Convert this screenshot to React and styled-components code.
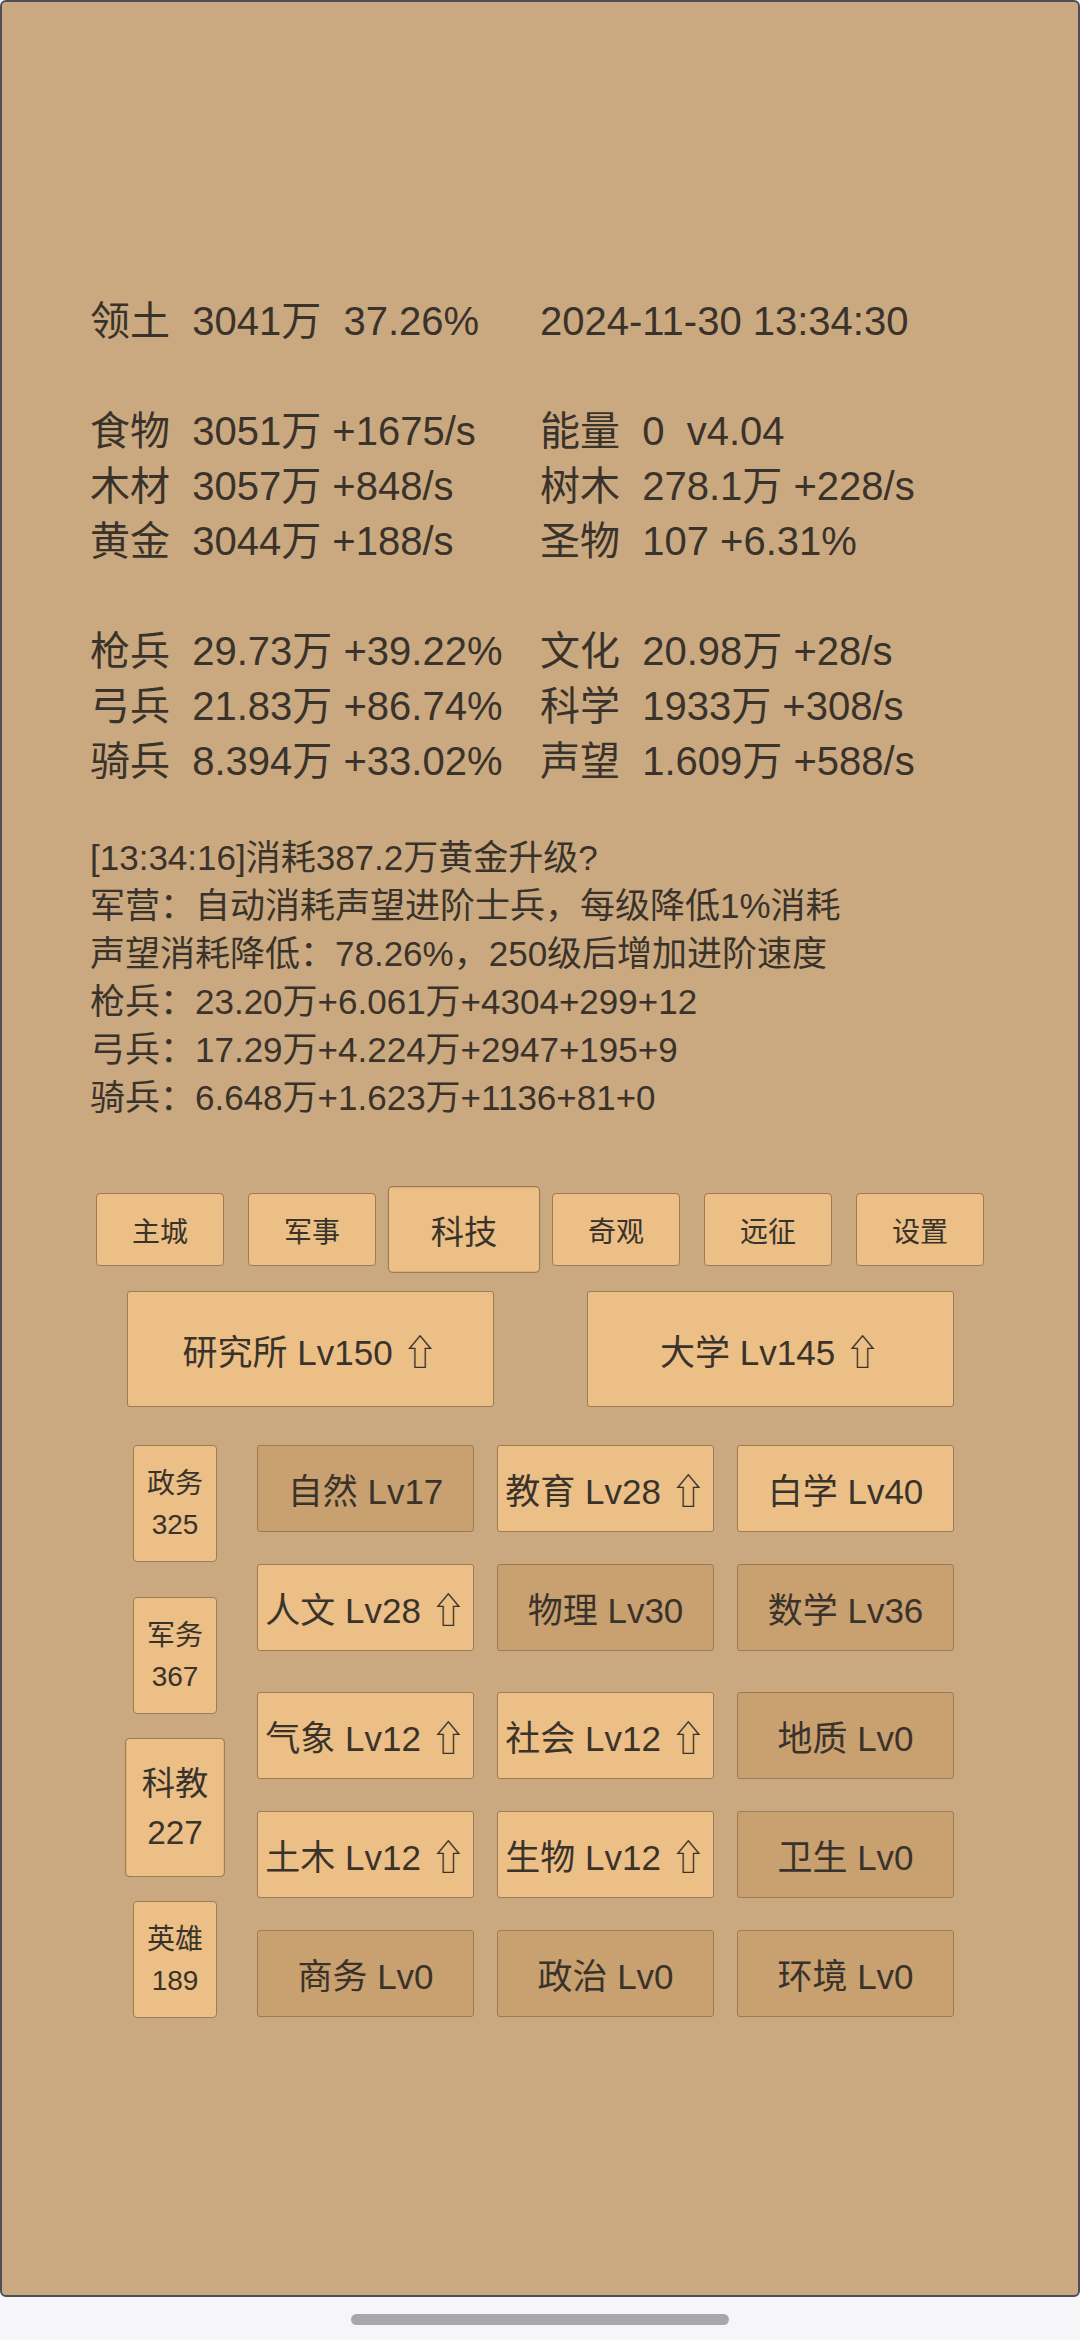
import styled, { createGlobalStyle } from "styled-components";

const FONT = `"Liberation Sans", "Noto Sans CJK SC", "DejaVu Sans", sans-serif`;

const GlobalStyle = createGlobalStyle`
  html, body {
    margin: 0;
    padding: 0;
    background: #f6f6f8;
  }
  body {
    font-family: ${FONT};
    color: #3a332b;
  }
`;

const Page = styled.div`
  display: flex;
  flex-direction: column;
  width: 1080px;
  height: 2340px;
`;

const Screen = styled.div`
  box-sizing: border-box;
  height: 2297px;
  padding-top: 292px;
  background: #caa980;
  border: 2px solid #4e4d5c;
  border-radius: 6px;
`;

const Stats = styled.div`
  display: grid;
  grid-template-columns: 450px 1fr;
  padding-left: 88px;
  font-size: 40px;
  line-height: 55px;
  white-space: pre;
`;

const BlankRow = styled.div`
  grid-column: 1 / -1;
  height: 55px;
`;

const Log = styled.div`
  margin-top: 45px;
  padding-left: 88px;
  font-size: 35px;
  line-height: 48px;
  white-space: pre;
`;

const TabBar = styled.div`
  display: flex;
  justify-content: center;
  gap: 24px;
  margin-top: 71px;
`;

const Tab = styled.div`
  box-sizing: border-box;
  display: flex;
  align-items: center;
  justify-content: center;
  width: 128px;
  height: 73px;
  font-size: 28px;
  background: #ebbf86;
  border: 1px solid #9c7b55;
  border-radius: 4px;
  transform: ${(p) => (p.$active ? "scale(1.19)" : "none")};
`;

const BigRow = styled.div`
  display: flex;
  justify-content: center;
  gap: 93px;
  margin-top: 25px;
`;

const BigButton = styled.div`
  box-sizing: border-box;
  display: flex;
  align-items: center;
  justify-content: center;
  width: 367px;
  height: 116px;
  font-size: 35px;
  background: #ebbf86;
  border: 1px solid #9c7b55;
  border-radius: 3px;
`;

const Section = styled.div`
  display: flex;
  gap: 33px;
  width: 828px;
  margin: 38px auto 0;
`;

const SideColumn = styled.div`
  display: flex;
  flex-direction: column;
  align-items: center;
  gap: 35px;
  width: 98px;
`;

const SideButton = styled.div`
  box-sizing: border-box;
  display: flex;
  flex-direction: column;
  align-items: center;
  justify-content: center;
  width: 84px;
  height: 117px;
  font-size: 28px;
  line-height: 41px;
  background: #ebbf86;
  border: 1px solid #9c7b55;
  border-radius: 4px;
  transform: ${(p) => (p.$active ? "scale(1.19)" : "none")};
`;

const TechGrid = styled.div`
  display: flex;
  flex-direction: column;
  gap: 32px;
`;

const TechRow = styled.div`
  display: grid;
  grid-template-columns: repeat(3, 217px);
  gap: 23px;
  margin-top: ${(p) => (p.$spaced ? "9px" : "0")};
`;

const TechButton = styled.div`
  box-sizing: border-box;
  display: flex;
  align-items: center;
  justify-content: center;
  height: 87px;
  font-size: 35px;
  white-space: pre;
  background: ${(p) => (p.$dim ? "#c9a06f" : "#ebbf86")};
  border: 1px solid #9c7b55;
  border-radius: 3px;
`;

const Footer = styled.div`
  flex: 1;
  display: flex;
  justify-content: center;
  padding-top: 17px;
`;

const HomeBar = styled.div`
  width: 378px;
  height: 11px;
  border-radius: 6px;
  background: #a8a8aa;
`;

const stats = [
  ["领土  3041万  37.26%", "2024-11-30 13:34:30"],
  null,
  ["食物  3051万 +1675/s", "能量  0  v4.04"],
  ["木材  3057万 +848/s", "树木  278.1万 +228/s"],
  ["黄金  3044万 +188/s", "圣物  107 +6.31%"],
  null,
  ["枪兵  29.73万 +39.22%", "文化  20.98万 +28/s"],
  ["弓兵  21.83万 +86.74%", "科学  1933万 +308/s"],
  ["骑兵  8.394万 +33.02%", "声望  1.609万 +588/s"],
];

const logLines = [
  "[13:34:16]消耗387.2万黄金升级?",
  "军营：自动消耗声望进阶士兵，每级降低1%消耗",
  "声望消耗降低：78.26%，250级后增加进阶速度",
  "枪兵：23.20万+6.061万+4304+299+12",
  "弓兵：17.29万+4.224万+2947+195+9",
  "骑兵：6.648万+1.623万+1136+81+0",
];

const tabs = ["主城", "军事", "科技", "奇观", "远征", "设置"];

const side = [
  ["政务", "325"],
  ["军务", "367"],
  ["科教", "227", true],
  ["英雄", "189"],
];

// dim = not upgradable right now
const techs = [
  [["自然 Lv17", true], ["教育 Lv28 ⇧"], ["白学 Lv40"]],
  [["人文 Lv28 ⇧"], ["物理 Lv30", true], ["数学 Lv36", true]],
  [["气象 Lv12 ⇧"], ["社会 Lv12 ⇧"], ["地质 Lv0", true]],
  [["土木 Lv12 ⇧"], ["生物 Lv12 ⇧"], ["卫生 Lv0", true]],
  [["商务 Lv0", true], ["政治 Lv0", true], ["环境 Lv0", true]],
];

export default function App() {
  return (
    <Page>
      <GlobalStyle />
      <Screen>
        <Stats>
          {stats.map((row, i) =>
            row ? (
              [<div key={i + "a"}>{row[0]}</div>, <div key={i + "b"}>{row[1]}</div>]
            ) : (
              <BlankRow key={i} />
            )
          )}
        </Stats>

        <Log>
          {logLines.map((l) => (
            <div key={l}>{l}</div>
          ))}
        </Log>

        <TabBar>
          {tabs.map((t) => (
            <Tab key={t} $active={t === "科技"}>
              {t}
            </Tab>
          ))}
        </TabBar>

        <BigRow>
          <BigButton>研究所 Lv150 ⇧</BigButton>
          <BigButton>大学 Lv145 ⇧</BigButton>
        </BigRow>

        <Section>
          <SideColumn>
            {side.map(([name, num, active]) => (
              <SideButton key={name} $active={active}>
                <span>{name}</span>
                <span>{num}</span>
              </SideButton>
            ))}
          </SideColumn>
          <TechGrid>
            {techs.map((row, i) => (
              <TechRow key={i} $spaced={i === 2}>
                {row.map(([label, dim]) => (
                  <TechButton key={label} $dim={dim}>
                    {label}
                  </TechButton>
                ))}
              </TechRow>
            ))}
          </TechGrid>
        </Section>
      </Screen>
      <Footer>
        <HomeBar />
      </Footer>
    </Page>
  );
}
